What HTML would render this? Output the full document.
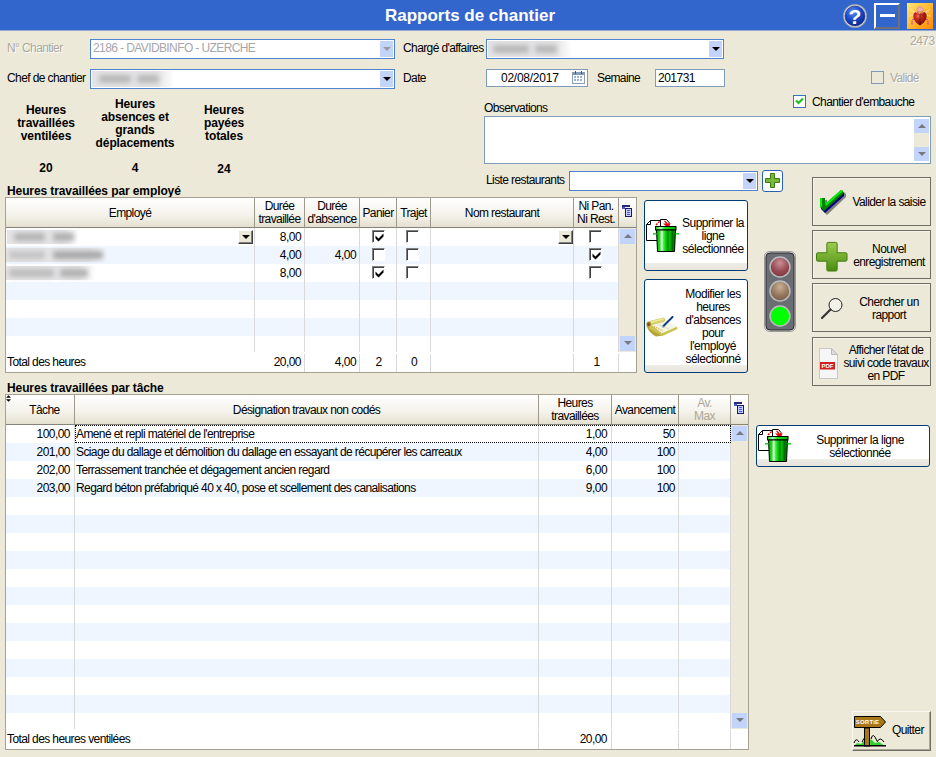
<!DOCTYPE html>
<html lang="fr">
<head>
<meta charset="utf-8">
<title>Rapports de chantier</title>
<style>
*{box-sizing:border-box;margin:0;padding:0}
html,body{width:936px;height:757px;overflow:hidden;background:#ece9d8}
body{position:relative;font-family:"Liberation Sans",sans-serif;font-size:12px;color:#000;letter-spacing:-0.6px;line-height:13px}
.a{position:absolute;white-space:nowrap}
.title{left:0;top:0;width:936px;height:31px;background:linear-gradient(#3366cc 30px,#90a8d2 30px)}
.title .t{left:0;width:940px;top:6px;text-align:center;color:#fff;font-weight:bold;font-size:17px;line-height:20px;letter-spacing:0}
.lbl{height:13px}
.dis{color:#aca899}
.inp{background:#fff;border:1px solid #4d84cd;height:20px;padding:2px 2px;line-height:13px}
.cb{position:absolute;right:1px;top:1px;bottom:1px;width:13px;background:#c3d4fb}
.cb:after{content:"";position:absolute;left:3px;top:6px;border:4px solid transparent;border-top:4px solid #000;border-bottom:0}
.cb.g:after{border-top-color:#999}
.b{font-weight:bold;letter-spacing:-0.1px}
.c{text-align:center}
.chk{width:13px;height:13px;border:1px solid #3d6fc2;background:#fff}
.grid{background:#fff;border:1px solid #a5a294;overflow:hidden}
.hd{top:0;height:30px;background:linear-gradient(#fff,#f4f2ea 60%,#e4e0d0);border-right:1px solid #9d9a8c;border-bottom:1px solid #85837a;text-align:center;line-height:13px}
.hd>span{position:absolute;left:0;right:0;top:calc(50% + 0.5px);transform:translateY(-50%)}
.row{left:0;height:18px}
.blue{background:#eff6ff}
.vl{top:30px;width:1px;background:#d9d9d9}
.cell{height:18px;line-height:18px}
.r{text-align:right}
.btn{background:#ece9d8;border:1px solid #f8f7f2;border-right-color:#716f64;border-bottom-color:#716f64;box-shadow:inset -1px -1px 0 #aca899;text-align:center;line-height:13px}
.btnx{letter-spacing:-0.5px;border:1px solid #003c74;border-radius:3px;text-align:center;line-height:13px;background:linear-gradient(#fff calc(100% - 7px),#eeede6 calc(100% - 7px),#e6e4dc)}
.c3{width:13px;height:13px;background:#fff;border:1px solid #808080;border-right-color:#fff;border-bottom-color:#fff;box-shadow:inset 1px 1px 0 #404040}
.sb{background:#c3d4fb;width:17px;height:17px}
.sb:after{content:"";position:absolute;left:4px;top:5px;border:4px solid transparent}
.sb.up:after{border-bottom:4px solid #77797f;border-top:0}
.sb.dn:after{border-top:4px solid #77797f;border-bottom:0}
.blur{position:absolute;height:8px;background:#b8b8b8;filter:blur(2.4px);border-radius:3px}
.blurbg{position:absolute;background:linear-gradient(90deg,#e4e4e6 80%,rgba(228,228,230,0))}
.btnf{border:1px solid #6e6e66;background:#ece9d8;text-align:center;line-height:13px;box-shadow:inset 1px 1px 0 #f6f4ec}
</style>
</head>
<body>
<!-- TITLE BAR -->
<div class="a title">
  <div class="a t">Rapports de chantier</div>
</div>
<!--ICONS-->
<svg class="a" style="left:842px;top:3px" width="26" height="26" viewBox="0 0 26 26"><defs><radialGradient id="hg" cx="0.4" cy="0.3" r="0.8"><stop offset="0" stop-color="#5a8cf0"/><stop offset="0.5" stop-color="#1a48c8"/><stop offset="1" stop-color="#08207a"/></radialGradient></defs><circle cx="13" cy="13" r="12" fill="#9aa0b0"/><circle cx="13" cy="13" r="11" fill="#d8dce8"/><circle cx="13" cy="13" r="10" fill="url(#hg)" stroke="#1a2a6a" stroke-width="0.600"/><text x="13" y="20.500" font-size="21" font-weight="bold" fill="#fff" text-anchor="middle" font-family="Liberation Sans, sans-serif" letter-spacing="0">?</text></svg>
<div class="a" style="left:874px;top:3px;width:26px;height:26px;border:2px solid #fff;border-right-color:#707070;border-bottom-color:#707070;background:#3366cc"><div class="a" style="left:4px;top:9px;width:15px;height:3px;background:#fff"></div></div>
<svg class="a" style="left:907px;top:3px" width="26" height="26" viewBox="0 0 26 26"><defs><linearGradient id="bg" x1="0" y1="0" x2="1" y2="1"><stop offset="0" stop-color="#ffe878"/><stop offset="0.500" stop-color="#ffb830"/><stop offset="1" stop-color="#ff8800"/></linearGradient><radialGradient id="rb" cx="0.380" cy="0.300" r="0.750"><stop offset="0" stop-color="#f07060"/><stop offset="0.350" stop-color="#c02818"/><stop offset="1" stop-color="#6a0a04"/></radialGradient></defs><rect width="26" height="26" fill="url(#bg)"/><path d="M7.500 9.500 Q5 8 3.500 6 M18.500 9.500 Q21 8 22.500 6 M6.500 12 Q4 12 2.500 13.500 M19.500 12 Q22 12 23.500 13.500" fill="none" stroke="#fbe0e0" stroke-width="1.100" stroke-dasharray="1.600 0.800"/><path d="M6.500 16 Q4 18 5.500 22.500 M19.500 16 Q22 18 20.500 22.500" fill="none" stroke="#c828c8" stroke-width="1.200" stroke-dasharray="1.400 0.900"/><path d="M13 3.500 C10.500 3.500 9.500 6 10 8.500 L16 8.500 C16.500 6 15.500 3.500 13 3.500z" fill="#eeb0a8" stroke="#c07070" stroke-width="0.500"/><path d="M13 22.500 C6.500 19 5.500 13 7 10.500 C8.500 8.500 11.500 8.800 13 10.200 C14.500 8.800 17.500 8.500 19 10.500 C20.500 13 19.500 19 13 22.500z" fill="url(#rb)"/><path d="M13 10.500 V22" stroke="#5a0804" stroke-width="0.700"/><path d="M9 9.200 Q13 11 17 9.200" stroke="#fff4f0" stroke-width="0.900" fill="none" stroke-dasharray="1 0.600"/></svg>
<!--/ICONS-->
<!--FORM-->
<div class="a lbl dis" style="left:7px;top:42px;text-shadow:1px 1px 0 #fff">N° Chantier</div>
<div class="a inp" style="left:90px;top:39px;width:305px;color:#a7a6aa">2186 - DAVIDBINFO - UZERCHE<div class="cb g"></div></div>
<div class="a lbl" style="left:403px;top:42px">Chargé d'affaires</div>
<div class="a inp" style="left:486px;top:39px;width:238px"><span class="blurbg" style="left:1px;top:1px;width:84px;height:16px"></span><span class="blur" style="left:6px;top:5px;width:36px"></span><span class="blur" style="left:48px;top:5px;width:22px"></span><div class="cb"></div></div>
<div class="a lbl" style="left:7px;top:72px">Chef de chantier</div>
<div class="a inp" style="left:90px;top:69px;width:305px"><span class="blurbg" style="left:1px;top:1px;width:82px;height:16px"></span><span class="blur" style="left:8px;top:5px;width:32px"></span><span class="blur" style="left:46px;top:5px;width:22px"></span><div class="cb"></div></div>
<div class="a lbl" style="left:403px;top:72px">Date</div>
<div class="a inp" style="left:486px;top:69px;width:102px;height:18px;border-color:#7f9db9;padding:2px 0 0 14px;font-size:12px;letter-spacing:-0.25px">02/08/2017
<svg class="a" style="right:2px;top:1px" width="13" height="14" viewBox="0 0 13 14"><rect x="0.5" y="1.5" width="12" height="11" fill="#fff" stroke="#8a9cb8"/><rect x="1" y="2" width="11" height="2" fill="#7f9db9"/><g fill="#9db4d8"><rect x="2" y="5" width="2" height="2"/><rect x="5" y="5" width="2" height="2"/><rect x="8" y="5" width="2" height="2"/><rect x="2" y="8" width="2" height="2"/><rect x="5" y="8" width="2" height="2"/><rect x="8" y="8" width="2" height="2"/></g><rect x="3" y="0" width="1" height="3" fill="#555"/><rect x="9" y="0" width="1" height="3" fill="#555"/></svg></div>
<div class="a lbl" style="left:597px;top:72px">Semaine</div>
<div class="a inp" style="left:655px;top:69px;width:70px;height:18px;border-color:#7f9db9;padding:2px 2px;letter-spacing:-0.5px">201731</div>
<div class="a chk" style="left:871px;top:71px;background:#ece9d8;border-color:#7f9db9"></div>
<div class="a lbl dis" style="left:890px;top:72px;text-shadow:1px 1px 0 #fff">Validé</div>
<div class="a dis" style="left:910px;top:35px;letter-spacing:-0.5px;text-shadow:1px 1px 0 #fff">2473</div>
<div class="a chk" style="left:793px;top:95px"><svg class="a" style="left:1px;top:1px" width="9" height="9" viewBox="0 0 9 9"><path d="M1 3.5 L3.5 6 L8 1.5" fill="none" stroke="#1fbf1f" stroke-width="2.200"/></svg></div>
<div class="a lbl" style="left:812px;top:96px">Chantier d'embauche</div>
<div class="a lbl" style="left:484px;top:102px">Observations</div>
<div class="a inp" style="left:484px;top:116px;width:447px;height:48px;border-color:#7f9db9"><div class="a" style="right:1px;top:2px;width:15px;height:42px;background:#ece9d8"><div class="a sb up" style="left:0;top:0;width:15px;height:14px"></div><div class="a sb dn" style="left:0;bottom:0;width:15px;height:14px"></div></div></div>
<div class="a lbl" style="left:486px;top:174px">Liste restaurants</div>
<div class="a inp" style="left:569px;top:171px;width:189px"><div class="cb"></div></div>
<div class="a" style="left:762px;top:170px;width:21px;height:22px;border:1.500px solid #2a62b0;border-radius:3px;background:#fff"><svg class="a" style="left:2px;top:2px" width="15" height="15" viewBox="0 0 15 15"><path d="M5.500 0.500h4v5h5v4h-5v5h-4v-5h-5v-4h5z" fill="#7ab83a" stroke="#3a7a10" stroke-width="1"/></svg></div>
<!--/FORM-->
<!--STATS-->
<div class="a b c" style="left:0;top:104px;width:92px;letter-spacing:-0.1px;font-size:12px">Heures<br>travaillées<br>ventilées</div>
<div class="a b c" style="left:85px;top:98px;width:100px;letter-spacing:-0.1px;font-size:12px">Heures<br>absences et<br>grands<br>déplacements</div>
<div class="a b c" style="left:178px;top:104px;width:92px;letter-spacing:-0.1px;font-size:12px">Heures<br>payées<br>totales</div>
<div class="a b c" style="left:0;top:162px;width:92px;font-size:12px;letter-spacing:0">20</div>
<div class="a b c" style="left:85px;top:162px;width:100px;font-size:12px;letter-spacing:0">4</div>
<div class="a b c" style="left:178px;top:163px;width:92px;font-size:12px;letter-spacing:0">24</div>
<div class="a b" style="left:7px;top:185px;font-size:12px;letter-spacing:-0.1px">Heures travaillées par employé</div>
<div class="a b" style="left:7px;top:382px;font-size:12px;letter-spacing:-0.1px">Heures travaillées par tâche</div>
<!--/STATS-->
<!--GRID1-->
<div class="a grid" style="left:5px;top:197px;width:632px;height:176px">
<div class="a row" style="top:30px;width:612px"></div>
<div class="a row blue" style="top:48px;width:612px"></div>
<div class="a row" style="top:66px;width:612px"></div>
<div class="a row blue" style="top:84px;width:612px"></div>
<div class="a row" style="top:102px;width:612px"></div>
<div class="a row blue" style="top:120px;width:612px"></div>
<div class="a row" style="top:138px;width:612px"></div>
<div class="a hd" style="left:0px;width:249px"><span>Employé</span></div>
<div class="a hd" style="left:249px;width:50px"><span>Durée<br>travaillée</span></div>
<div class="a hd" style="left:299px;width:55px"><span>Durée<br>d'absence</span></div>
<div class="a hd" style="left:354px;width:37px"><span>Panier</span></div>
<div class="a hd" style="left:391px;width:34px"><span>Trajet</span></div>
<div class="a hd" style="left:425px;width:143px"><span>Nom restaurant</span></div>
<div class="a hd" style="left:568px;width:45px"><span>Ni Pan.<br>Ni Rest.</span></div>
<div class="a hd" style="left:613px;width:18px"><span></span></div>
<div class="a" style="left:0;top:154px;width:630px;height:20px;background:#fff"></div>
<div class="a vl" style="left:248px;height:124px"></div>
<div class="a vl" style="left:298px;height:124px"></div>
<div class="a vl" style="left:298px;top:156px;height:18px"></div>
<div class="a vl" style="left:353px;height:124px"></div>
<div class="a vl" style="left:353px;top:156px;height:18px"></div>
<div class="a vl" style="left:390px;height:124px"></div>
<div class="a vl" style="left:390px;top:156px;height:18px"></div>
<div class="a vl" style="left:424px;height:124px"></div>
<div class="a vl" style="left:424px;top:156px;height:18px"></div>
<div class="a vl" style="left:567px;height:124px"></div>
<div class="a vl" style="left:567px;top:156px;height:18px"></div>
<div class="a vl" style="left:612px;height:124px"></div>
<div class="a vl" style="left:612px;top:156px;height:18px"></div>
<div class="a" style="left:613px;top:30px;width:18px;height:124px;background:#ece9d8"><div class="a sb up" style="left:1px;top:1px;height:15px;width:15px"></div><div class="a sb dn" style="left:1px;top:108px;height:15px;width:15px"></div></div>
<svg class="a" style="left:616px;top:7px" width="10" height="12" viewBox="0 0 10 12"><rect x="0" y="0" width="8" height="2" fill="#2a2a7a"/><rect x="0" y="2" width="3" height="2" fill="#4a5acb"/><rect x="3.5" y="3.5" width="6" height="8" fill="#c8d0ff" stroke="#1a1a60"/><rect x="5" y="5" width="3" height="1" fill="#4a5acb"/><rect x="5" y="7" width="3" height="1" fill="#4a5acb"/><rect x="5" y="9" width="3" height="1" fill="#4a5acb"/></svg>
<span class="blurbg" style="left:1px;top:32px;width:72px;height:14px"></span>
<span class="blur" style="left:8px;top:35px;width:31px;background:#b4b4b4"></span>
<span class="blur" style="left:47px;top:35px;width:21px;background:#b0b0b0"></span>
<div class="a cell r" style="left:249px;width:46px;top:30px;letter-spacing:-0.55px">8,00</div>
<div class="a c3" style="left:366px;top:32px"><svg class="a" style="left:2px;top:2px" width="9" height="9" viewBox="0 0 9 9"><path d="M0.500 2.500 L3.500 5.500 L8.500 0.500 L8.500 3.500 L3.500 8.500 L0.500 5.500z" fill="#000"/></svg></div>
<div class="a c3" style="left:400px;top:32px"></div>
<div class="a c3" style="left:583px;top:32px"></div>
<span class="blurbg" style="left:0px;top:50px;width:101px;height:14px"></span>
<span class="blur" style="left:3px;top:53px;width:36px;background:#c4c4c6"></span>
<span class="blur" style="left:47px;top:53px;width:50px;background:#a8a8aa"></span>
<div class="a cell r" style="left:249px;width:46px;top:48px;letter-spacing:-0.55px">4,00</div>
<div class="a cell r" style="left:299px;width:51px;top:48px;letter-spacing:-0.55px">4,00</div>
<div class="a c3" style="left:366px;top:50px"></div>
<div class="a c3" style="left:400px;top:50px"></div>
<div class="a c3" style="left:583px;top:50px"><svg class="a" style="left:2px;top:2px" width="9" height="9" viewBox="0 0 9 9"><path d="M0.500 2.500 L3.500 5.500 L8.500 0.500 L8.500 3.500 L3.500 8.500 L0.500 5.500z" fill="#000"/></svg></div>
<span class="blurbg" style="left:0px;top:68px;width:90px;height:14px"></span>
<span class="blur" style="left:3px;top:71px;width:45px;background:#bcbcbc"></span>
<span class="blur" style="left:54px;top:71px;width:28px;background:#b0b0b0"></span>
<div class="a cell r" style="left:249px;width:46px;top:66px;letter-spacing:-0.55px">8,00</div>
<div class="a c3" style="left:366px;top:68px"><svg class="a" style="left:2px;top:2px" width="9" height="9" viewBox="0 0 9 9"><path d="M0.500 2.500 L3.500 5.500 L8.500 0.500 L8.500 3.500 L3.500 8.500 L0.500 5.500z" fill="#000"/></svg></div>
<div class="a c3" style="left:400px;top:68px"></div>
<div class="a c3" style="left:583px;top:68px"></div>
<div class="a" style="left:232px;top:32px;width:15px;height:14px;background:#ece9d8;border:1px solid #fff;border-right-color:#404040;border-bottom-color:#404040;box-shadow:inset -1px -1px 0 #808080"><div class="a" style="left:3px;top:4px;border:4px solid transparent;border-top:4px solid #000;border-bottom:0"></div></div>
<div class="a" style="left:552px;top:32px;width:15px;height:14px;background:#ece9d8;border:1px solid #fff;border-right-color:#404040;border-bottom-color:#404040;box-shadow:inset -1px -1px 0 #808080"><div class="a" style="left:3px;top:4px;border:4px solid transparent;border-top:4px solid #000;border-bottom:0"></div></div>
<div class="a cell" style="left:1px;top:155px">Total des heures</div>
<div class="a cell r" style="left:249px;width:46px;top:155px;letter-spacing:-0.55px">20,00</div>
<div class="a cell r" style="left:299px;width:51px;top:155px;letter-spacing:-0.55px">4,00</div>
<div class="a cell c" style="left:354px;width:37px;top:155px;letter-spacing:-0.55px">2</div>
<div class="a cell c" style="left:391px;width:34px;top:155px;letter-spacing:-0.55px">0</div>
<div class="a cell c" style="left:568px;width:45px;top:155px;letter-spacing:-0.55px">1</div>
</div>
<!--/GRID1-->
<!--BUTTONS-->
<div class="a btnx" style="left:644px;top:200px;width:104px;height:71px"><div class="a" style="left:33px;width:70px;top:16px">Supprimer la<br>ligne<br>sélectionnée</div>
<svg class="a" style="left:1px;top:18px" width="33" height="34" viewBox="0 0 33 34"><use href="#trash"/></svg></div>
<div class="a btnx" style="left:644px;top:279px;width:104px;height:94px"><div class="a" style="left:33px;width:70px;top:8px">Modifier les<br>heures<br>d'absences<br>pour<br>l'employé<br>sélectionné</div>
<svg class="a" style="left:0px;top:36px" width="34" height="24" viewBox="0 0 34 24"><path d="M1.500 7 L6 8 L18 19.500 L11 20.500 Q4 17 1.500 10z" fill="#b8a53a"/><path d="M6 8.500 L17 17 L32 10.500 L32.500 13 L17.500 20 L4 12.500z" fill="#cbc455"/><path d="M6 8.500 L20 4.500 L32 10.500 L17 17z" fill="#f3f4e2"/><path d="M9 10.500 L18 15" stroke="#e0a040" stroke-width="1.200" stroke-dasharray="1.200 1.200"/><path d="M13 8.500 L24 13" stroke="#d8dcc0" stroke-width="0.800"/><path d="M4 7.500 L18 3.800" stroke="#d6cf6a" stroke-width="4.400" stroke-linecap="round"/><path d="M5 6.500 L18 3" stroke="#eee99a" stroke-width="1.600" stroke-linecap="round"/><circle cx="3.800" cy="8" r="2.300" fill="#9a7f2a"/><circle cx="3.600" cy="8.600" r="1.100" fill="#7a3a20"/><path d="M18 10.500 L27.500 1" stroke="#123a84" stroke-width="2" stroke-linecap="round"/><path d="M17 11.500 L18.300 10.200" stroke="#cfd4dc" stroke-width="1.200"/></svg></div>
<!-- traffic light -->
<svg class="a" style="left:764px;top:251px" width="32" height="81" viewBox="0 0 32 81"><rect x="0.5" y="0.5" width="31" height="80" rx="5" fill="#d4d4d4" stroke="#9a9a9a"/><rect x="2" y="2" width="28" height="77" rx="4" fill="#6a6e72" stroke="#2a2a2a"/>
<defs><radialGradient id="lr" cx="0.5" cy="0.3" r="0.7"><stop offset="0" stop-color="#c89098"/><stop offset="0.6" stop-color="#9a4a52"/><stop offset="1" stop-color="#7a3a42"/></radialGradient><radialGradient id="lo" cx="0.5" cy="0.3" r="0.7"><stop offset="0" stop-color="#c8b098"/><stop offset="0.6" stop-color="#96785c"/><stop offset="1" stop-color="#7a6048"/></radialGradient></defs>
<g stroke="#b8bcc0" stroke-width="1.5"><circle cx="16" cy="16" r="10" fill="url(#lr)"/><circle cx="16" cy="40" r="10" fill="url(#lo)"/><circle cx="16" cy="65" r="10" fill="#00ff00"/></g></svg>
<!-- right buttons -->
<div class="a btnf" style="left:812px;top:177px;width:119px;height:49px"><div class="a" style="left:36px;width:80px;top:18px">Valider la saisie</div>
<svg class="a" style="left:6px;top:11px" width="27" height="27" viewBox="0 0 27 27"><path d="M4 11 L8 11 L8 18 L25 3 L27 5 L27 8 L8 26 L4 22z" fill="#808080"/><path d="M2 10 L6 10 L6 17 L23 2 L25 4 L25 7 L6 24 L2 20z" fill="#000080"/><path d="M1 9 L6 9 L6 15 L22 1 L24 2 L24 5 L5 22 L1 18z" fill="#008000"/><path d="M1 9 L3 9 L3 18 L1 18z M6 15 L22 1 L24 2 L7 17z" fill="#00f000"/></svg></div>
<div class="a btnf" style="left:812px;top:230px;width:119px;height:49px"><div class="a" style="left:36px;width:80px;top:12px">Nouvel<br>enregistrement</div>
<svg class="a" style="left:3px;top:10px" width="32" height="31" viewBox="0 0 34 33"><defs><linearGradient id="pg" x1="0" y1="0" x2="0" y2="1"><stop offset="0" stop-color="#9ccc50"/><stop offset="1" stop-color="#4c8c10"/></linearGradient></defs><path d="M13 1.500h8a1.500 1.500 0 0 1 1.500 1.500v9.500h9a1.500 1.500 0 0 1 1.500 1.500v6a1.500 1.500 0 0 1-1.500 1.500h-9v9a1.500 1.500 0 0 1-1.500 1.500h-8a1.500 1.500 0 0 1-1.500-1.500v-9h-9.500a1.500 1.500 0 0 1-1.500-1.500v-6a1.500 1.500 0 0 1 1.500-1.500h9.500v-9.500a1.500 1.500 0 0 1 1.500-1.500z" fill="url(#pg)" stroke="#3a7a08"/></svg></div>
<div class="a btnf" style="left:812px;top:283px;width:119px;height:49px"><div class="a" style="left:36px;width:80px;top:12px">Chercher un<br>rapport</div>
<svg class="a" style="left:7px;top:13px" width="24" height="23" viewBox="0 0 24 23"><circle cx="15.500" cy="8" r="6.500" fill="#f4f2e8" stroke="#222" stroke-width="1"/><path d="M10.500 12.500 L2 21" stroke="#333" stroke-width="2.200" stroke-linecap="round"/></svg></div>
<div class="a btnf" style="left:812px;top:337px;width:119px;height:49px"><div class="a" style="left:28px;width:90px;top:6px">Afficher l'état de<br>suivi code travaux<br>en PDF</div>
<svg class="a" style="left:6px;top:10px" width="20" height="31" viewBox="0 0 20 31"><path d="M0.500 0.500h12l6 6v24h-18z" fill="#f6f6f6" stroke="#c8c8c8"/><path d="M12.500 0.500v6h6z" fill="#ddd" stroke="#bbb"/><rect x="1" y="14" width="15" height="7.500" fill="#d02020"/><text x="8.500" y="20" font-size="6" font-weight="bold" fill="#fff" text-anchor="middle" font-family="Liberation Sans, sans-serif" letter-spacing="0">PDF</text></svg></div>
<!-- bottom delete -->
<div class="a btnx" style="left:756px;top:425px;width:174px;height:42px"><div class="a" style="left:33px;width:140px;top:8px">Supprimer la ligne<br>sélectionnée</div>
<svg class="a" style="left:1px;top:3px" width="33" height="34" viewBox="0 0 33 34"><use href="#trash"/></svg></div>
<!-- quitter -->
<div class="a btn" style="left:852px;top:711px;width:79px;height:40px"><div class="a" style="left:39px;top:12px;text-align:left">Quitter</div>
<svg class="a" style="left:0px;top:3px" width="34" height="32" viewBox="0 0 34 32"><path d="M1 28 q2 -6 5 -1 M9 27 q4 -10 8 0 M18 24 q2 -8 6 2 M24 27 q3 -6 7 0" fill="none" stroke="#000" stroke-width="1"/><path d="M1 31 L4 28 L8 29 L12 25 L14 29 L18 24 L22 28 L26 27 L32 31z" fill="#30d030"/><rect x="11.500" y="13" width="5" height="18" fill="#a87818" stroke="#000"/><path d="M1.500 1.500h26l5 5.500l-5 5.500h-26z" fill="#a87818" stroke="#000"/><rect x="1" y="30" width="32" height="1.500" fill="#000"/><text x="14.500" y="9.300" font-size="6" font-weight="bold" fill="#fff" text-anchor="middle" font-family="Liberation Sans, sans-serif" letter-spacing="0.2">SORTiE</text></svg></div>
<!-- shared defs -->
<svg width="0" height="0" style="position:absolute"><defs><g id="trash"><path d="M14.500 0.500 H20.500 L23 3.500 V8 H14.500z" fill="#fff" stroke="#000"/><path d="M0.500 5.500 L4.500 1.500 L14.500 1.500 L14.500 21.500 L0.500 21.500z" fill="#fff" stroke="#000"/><path d="M0.500 5.500 H4.500 V1.500" fill="none" stroke="#000"/><path d="M10 6 L14 2" fill="none" stroke="#f00000" stroke-width="1.400" stroke-dasharray="2 1"/><path d="M18.500 2 L21 4.500 M18.500 5 h5 l-2.500 2.500z" fill="#f00000" stroke="#f00000" stroke-width="1.200"/><rect x="9.500" y="7.500" width="20.500" height="3.500" fill="url(#lidg)" stroke="#000"/><path d="M10.500 11 H29.500 L28.500 32.500 H11.500z" fill="url(#bing)" stroke="#000"/><rect x="7" y="14" width="3.500" height="1.600" fill="#30d030"/><rect x="29.500" y="14" width="3.500" height="1.600" fill="#30d030"/></g><linearGradient id="bing" x1="0" y1="0" x2="1" y2="0"><stop offset="0" stop-color="#00b000"/><stop offset="0.180" stop-color="#20e020"/><stop offset="0.270" stop-color="#ffffff"/><stop offset="0.360" stop-color="#50f050"/><stop offset="0.500" stop-color="#00d000"/><stop offset="0.600" stop-color="#008800"/><stop offset="0.700" stop-color="#00c800"/><stop offset="0.840" stop-color="#006800"/><stop offset="1" stop-color="#00a800"/></linearGradient><linearGradient id="lidg" x1="0" y1="0" x2="1" y2="0"><stop offset="0" stop-color="#00c800"/><stop offset="0.250" stop-color="#c0ffc0"/><stop offset="0.450" stop-color="#20e020"/><stop offset="1" stop-color="#00b000"/></linearGradient></defs></svg>
<!--/BUTTONS-->
<!--GRID2-->
<div class="a grid" style="left:5px;top:394px;width:744px;height:356px">
<div class="a row" style="top:30px;width:725px"></div>
<div class="a row blue" style="top:48px;width:725px"></div>
<div class="a row" style="top:66px;width:725px"></div>
<div class="a row blue" style="top:84px;width:725px"></div>
<div class="a row" style="top:102px;width:725px"></div>
<div class="a row blue" style="top:120px;width:725px"></div>
<div class="a row" style="top:138px;width:725px"></div>
<div class="a row blue" style="top:156px;width:725px"></div>
<div class="a row" style="top:174px;width:725px"></div>
<div class="a row blue" style="top:192px;width:725px"></div>
<div class="a row" style="top:210px;width:725px"></div>
<div class="a row blue" style="top:228px;width:725px"></div>
<div class="a row" style="top:246px;width:725px"></div>
<div class="a row blue" style="top:264px;width:725px"></div>
<div class="a row" style="top:282px;width:725px"></div>
<div class="a row blue" style="top:300px;width:725px"></div>
<div class="a row" style="top:318px;width:725px"></div>
<div class="a" style="left:0;top:334px;width:742px;height:20px;background:#fff"></div>
<div class="a hd" style="left:0px;width:69px"><span style="left:9px">Tâche</span></div>
<div class="a hd" style="left:69px;width:464px"><span>Désignation travaux non codés</span></div>
<div class="a hd" style="left:533px;width:73px"><span>Heures<br>travaillées</span></div>
<div class="a hd" style="left:606px;width:67px"><span>Avancement</span></div>
<div class="a hd" style="left:673px;width:52px"><span style="color:#aca899">Av.<br>Max</span></div>
<div class="a hd" style="left:725px;width:18px"></div>
<div class="a vl" style="left:68px;height:304px"></div>
<div class="a vl" style="left:532px;height:304px"></div>
<div class="a vl" style="left:532px;top:335px;height:19px"></div>
<div class="a vl" style="left:605px;height:304px"></div>
<div class="a vl" style="left:605px;top:335px;height:19px"></div>
<div class="a vl" style="left:672px;height:304px"></div>
<div class="a vl" style="left:672px;top:335px;height:19px"></div>
<div class="a vl" style="left:724px;height:304px"></div>
<div class="a vl" style="left:724px;top:335px;height:19px"></div>
<div class="a" style="left:725px;top:30px;width:18px;height:304px;background:#ece9d8"><div class="a sb up" style="left:1px;top:1px;height:15px;width:15px"></div><div class="a sb dn" style="left:1px;top:288px;height:15px;width:15px"></div></div>
<svg class="a" style="left:728px;top:7px" width="10" height="12" viewBox="0 0 10 12"><rect x="0" y="0" width="8" height="2" fill="#2a2a7a"/><rect x="0" y="2" width="3" height="2" fill="#4a5acb"/><rect x="3.5" y="3.5" width="6" height="8" fill="#c8d0ff" stroke="#1a1a60"/><rect x="5" y="5" width="3" height="1" fill="#4a5acb"/><rect x="5" y="7" width="3" height="1" fill="#4a5acb"/><rect x="5" y="9" width="3" height="1" fill="#4a5acb"/></svg>
<svg class="a" style="left:0;top:0" width="5" height="7" viewBox="0 0 6 8"><path d="M3 0 L6 3 H0z M3 8 L6 5 H0z" fill="#000"/></svg>
<div class="a cell r" style="left:0;width:64px;top:30px;letter-spacing:-0.55px">100,00</div>
<div class="a cell" style="left:70px;top:30px">Amené et repli matériel de l'entreprise</div>
<div class="a cell r" style="left:533px;width:68px;top:30px;letter-spacing:-0.55px">1,00</div>
<div class="a cell r" style="left:606px;width:63px;top:30px;letter-spacing:-0.55px">50</div>
<div class="a cell r" style="left:0;width:64px;top:48px;letter-spacing:-0.55px">201,00</div>
<div class="a cell" style="left:70px;top:48px">Sciage du dallage et démolition du dallage en essayant de récupérer les carreaux</div>
<div class="a cell r" style="left:533px;width:68px;top:48px;letter-spacing:-0.55px">4,00</div>
<div class="a cell r" style="left:606px;width:63px;top:48px;letter-spacing:-0.55px">100</div>
<div class="a cell r" style="left:0;width:64px;top:66px;letter-spacing:-0.55px">202,00</div>
<div class="a cell" style="left:70px;top:66px">Terrassement tranchée et dégagement ancien regard</div>
<div class="a cell r" style="left:533px;width:68px;top:66px;letter-spacing:-0.55px">6,00</div>
<div class="a cell r" style="left:606px;width:63px;top:66px;letter-spacing:-0.55px">100</div>
<div class="a cell r" style="left:0;width:64px;top:84px;letter-spacing:-0.55px">203,00</div>
<div class="a cell" style="left:70px;top:84px">Regard béton préfabriqué 40 x 40, pose et scellement des canalisations</div>
<div class="a cell r" style="left:533px;width:68px;top:84px;letter-spacing:-0.55px">9,00</div>
<div class="a cell r" style="left:606px;width:63px;top:84px;letter-spacing:-0.55px">100</div>
<div class="a" style="left:69px;top:30px;width:656px;height:18px;border:1px dotted #000"></div>
<div class="a cell" style="left:1px;top:335px">Total des heures ventilées</div>
<div class="a cell r" style="left:533px;width:68px;top:335px;letter-spacing:-0.55px">20,00</div>
</div>
<!--/GRID2-->
</body>
</html>
